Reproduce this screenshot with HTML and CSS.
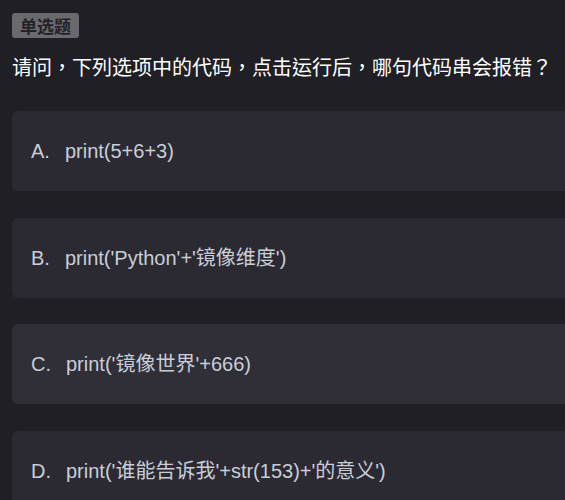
FILE: index.html
```html
<!DOCTYPE html>
<html lang="zh-CN">
<head>
<meta charset="utf-8">
<link rel="stylesheet" href="styles.css">
</head>
<body>
<div class="page">
  <div class="tag">单选题</div>
  <div class="question" lang="zh-TW">请问，下列选项中的代码，点击运行后，哪句代码串会报错？</div>
  <div class="options">
    <div class="option"><span class="label">A.</span><span class="code">print(5+6+3)</span></div>
    <div class="option"><span class="label">B.</span><span class="code">print('Python'+'镜像维度')</span></div>
    <div class="option hover"><span class="label">C.</span><span class="code">print('镜像世界'+666)</span></div>
    <div class="option"><span class="label">D.</span><span class="code">print('谁能告诉我'+str(153)+'的意义')</span></div>
  </div>
</div>
</body>
</html>
```

FILE: styles.css
```css
html, body {
  margin: 0;
  padding: 0;
  background: #201f25;
  overflow: hidden;
  height: 100%;
}
.page {
  padding: 13px 0 0 12px;
  font-family: "Liberation Sans", "Noto Sans CJK SC", sans-serif;
}
.tag {
  display: inline-block;
  background: #6a696e;
  color: #232228;
  font-family: "Noto Sans CJK SC", sans-serif;
  font-weight: 700;
  font-size: 17px;
  line-height: 25px;
  height: 25px;
  padding: 0 8px;
  border-radius: 3px;
}
.question {
  margin-top: 14px;
  color: #ffffff;
  font-family: "Noto Sans CJK TC", "Noto Sans CJK SC", sans-serif;
  font-size: 20px;
  line-height: 30px;
  white-space: nowrap;
}
.options {
  margin-top: 29px;
  margin-right: -40px;
  display: flex;
  flex-direction: column;
  gap: 26.5px;
}
.option {
  height: 80px;
  background: #2b2a32;
  border-radius: 6px;
  display: flex;
  align-items: center;
  padding-left: 19px;
  color: #c9cdd8;
  font-size: 20px;
  line-height: 24px;
  white-space: nowrap;
}
.option.hover {
  background: #302f37;
}
.label {
  margin-right: 15px;
}
```
